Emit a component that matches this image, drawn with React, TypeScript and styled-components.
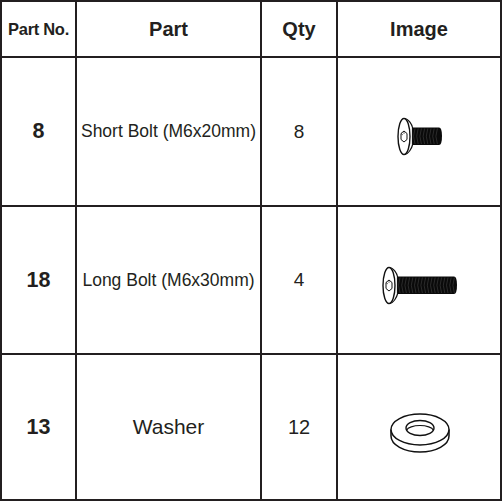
import React from "react";
import styled, { createGlobalStyle } from "styled-components";

const Global = createGlobalStyle`
  html, body { margin: 0; padding: 0; background: #ffffff; }
  body { font-family: "Liberation Sans", Arial, sans-serif; }
`;

const Table = styled.div`
  display: grid;
  width: 502px;
  box-sizing: border-box;
  grid-template-columns: 73px 183px 74px 162px;
  grid-template-rows: 54px 147px 146px 144px;
  gap: 2px;
  padding: 2px;
  background: #231f20;
`;

const Cell = styled.div<{ $size: number; $bold?: boolean }>`
  background: #ffffff;
  display: flex;
  align-items: center;
  justify-content: center;
  color: #231f20;
  font-family: "Liberation Sans", Arial, sans-serif;
  font-size: ${(p) => p.$size}px;
  font-weight: ${(p) => (p.$bold ? 700 : 400)};
  white-space: nowrap;
  letter-spacing: ${(p) => (p.$size < 18 && p.$bold ? "-0.3px" : "0")};
`;

const ImageCell = styled.div`
  background: #ffffff;
  display: flex;
  align-items: center;
  justify-content: center;
  padding-top: 11px;
  padding-left: 2px;
`;

const Threads: React.FC<{ x0: number; x1: number; y0: number; y1: number }> = ({ x0, x1, y0, y1 }) => {
  const arcs = [];
  for (let x = x0; x < x1; x += 3.2) {
    arcs.push(
      <path
        key={x}
        d={`M${x} ${y0 + 1} Q${x - 3} ${(y0 + y1) / 2} ${x} ${y1 - 1}`}
        stroke="#3a3a3a"
        strokeWidth="0.7"
        fill="none"
      />
    );
  }
  return <>{arcs}</>;
};

const Bolt: React.FC<{ length: number }> = ({ length }) => {
  const w = 20 + length;
  const shankTop = 10.5;
  const shankBot = 28;
  return (
    <svg width={w} height={40} viewBox={`0 0 ${w} 40`}>
      <path
        d={`M14 ${shankTop} L${w - 4} ${shankTop} Q${w - 1} ${shankTop} ${w - 1} 19 Q${w - 1} ${shankBot} ${w - 4} ${shankBot} L14 ${shankBot} Z`}
        fill="#0a0a0a"
      />
      <Threads x0={18} x1={w - 3} y0={shankTop} y1={shankBot} />
      <path
        d="M7 1.5 C12 1.5 15 8 15.5 10.5 L15.5 28 C15 30 12 37.5 7 37.5"
        fill="#ffffff"
        stroke="#111"
        strokeWidth="1.2"
      />
      <ellipse cx="7" cy="19.5" rx="6" ry="18" fill="#ffffff" stroke="#111" strokeWidth="1.4" />
      <polygon
        points="7,14 10,16.5 10,22.5 7,25 4,22.5 4,16.5"
        fill="#ffffff"
        stroke="#111"
        strokeWidth="1"
      />
      <path d="M7 14 L7 17 M4 16.5 L6 18" stroke="#111" strokeWidth="0.6" fill="none" />
    </svg>
  );
};

const Washer: React.FC = () => (
  <svg width={62} height={42} viewBox="0 0 62 42">
    <path
      d="M2 17.5 L2 24 A29 16 0 0 0 60 24 L60 17.5"
      fill="#ffffff"
      stroke="#111"
      strokeWidth="1.5"
    />
    <ellipse cx="31" cy="17.5" rx="29" ry="15.5" fill="#ffffff" stroke="#111" strokeWidth="1.5" />
    <ellipse cx="31" cy="16" rx="14" ry="7.5" fill="#ffffff" stroke="#111" strokeWidth="1.4" />
    <path d="M17.6 18.2 A13.6 5.6 0 0 1 44.4 18.2" fill="none" stroke="#111" strokeWidth="1.1" />
  </svg>
);

const rows = [
  { no: "8", part: "Short Bolt (M6x20mm)", qty: "8", img: <Bolt length={26} />, partSize: 17.5, qtySize: 19 },
  { no: "18", part: "Long Bolt (M6x30mm)", qty: "4", img: <Bolt length={56} />, partSize: 17.5, qtySize: 19 },
  { no: "13", part: "Washer", qty: "12", img: <Washer />, partSize: 21, qtySize: 20 },
];

export default function App() {
  return (
    <>
      <Global />
      <Table>
        <Cell $size={16.5} $bold>Part No.</Cell>
        <Cell $size={20} $bold>Part</Cell>
        <Cell $size={20} $bold>Qty</Cell>
        <Cell $size={20} $bold>Image</Cell>
        {rows.map((r) => (
          <React.Fragment key={r.no}>
            <Cell $size={21.5} $bold>{r.no}</Cell>
            <Cell $size={r.partSize}>{r.part}</Cell>
            <Cell $size={r.qtySize}>{r.qty}</Cell>
            <ImageCell>{r.img}</ImageCell>
          </React.Fragment>
        ))}
      </Table>
    </>
  );
}
